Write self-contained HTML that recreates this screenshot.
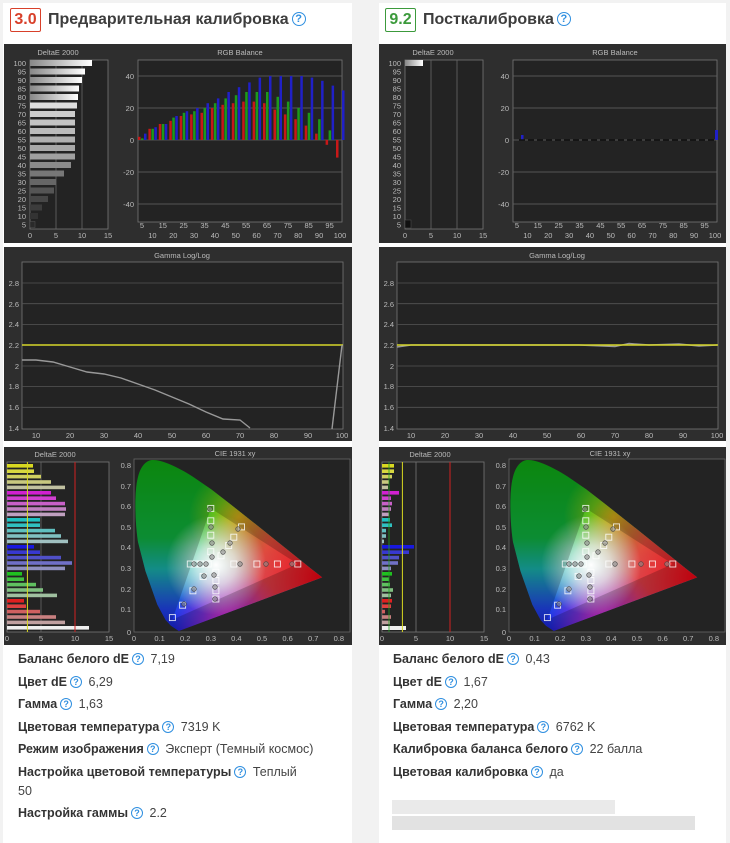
<!DOCTYPE html>
<html><head><meta charset="utf-8">
<style>
*{margin:0;padding:0;box-sizing:border-box}
body{width:730px;height:830px;background:#f2f2f2;position:relative;overflow:hidden;font-family:"Liberation Sans",sans-serif}
.card{position:absolute;top:3px;background:#fff;height:840px}
.badge{position:absolute;top:8px;width:31px;height:24px;border:1px solid;font:bold 16px "Liberation Sans",sans-serif;text-align:center;line-height:22px;border-radius:2px}
.title{position:absolute;top:11px;font:bold 16px "Liberation Sans",sans-serif;color:#3d3d3d}
.q{display:inline-block;width:12px;height:12px;border:1.3px solid #2f8fe0;border-radius:50%;color:#2f8fe0;font:bold 9px "Liberation Sans",sans-serif;text-align:center;line-height:10px;vertical-align:1px;margin:0 3px}
.title .q{width:14px;height:14px;font-size:11px;line-height:12px;vertical-align:2px}
svg{position:absolute;display:block}
svg text{font-family:"Liberation Sans",sans-serif;font-size:7.5px;fill:#bbb}
.rows{position:absolute;font-size:12.5px;color:#444;line-height:22.5px}
.rows b{color:#333}
.blur{position:absolute;background:#e6e6e6}
</style></head><body>
<svg width="0" height="0" style="position:absolute">
<defs>
<linearGradient id="gv" x1="0" y1="0" x2="0" y2="1"><stop offset="0" stop-color="#10a810"/><stop offset=".45" stop-color="#10b040"/><stop offset=".62" stop-color="#18b0a8"/><stop offset=".85" stop-color="#2040e8"/><stop offset="1" stop-color="#1818d0"/></linearGradient>
<radialGradient id="gr" cx="318" cy="130" r="125" gradientUnits="userSpaceOnUse"><stop offset="0" stop-color="#f00010"/><stop offset=".5" stop-color="#ff3838" stop-opacity=".85"/><stop offset="1" stop-color="#ff4040" stop-opacity="0"/></radialGradient>
<radialGradient id="gm" cx="225" cy="175" r="55" gradientUnits="userSpaceOnUse"><stop offset="0" stop-color="#e030d8"/><stop offset="1" stop-color="#c020c0" stop-opacity="0"/></radialGradient>
<radialGradient id="gy" cx="235" cy="70" r="50" gradientUnits="userSpaceOnUse"><stop offset="0" stop-color="#e0e000" stop-opacity=".85"/><stop offset="1" stop-color="#c8d000" stop-opacity="0"/></radialGradient>
<radialGradient id="gw" cx="212" cy="118" r="50" gradientUnits="userSpaceOnUse"><stop offset="0" stop-color="#fff"/><stop offset=".4" stop-color="#fff" stop-opacity=".7"/><stop offset="1" stop-color="#fff" stop-opacity="0"/></radialGradient>
<clipPath id="loc"><path d="M174.8,184 L166.9,178.8 L161.7,173.1 L153.3,157.6 L141.5,124.2 L134,95 C131,75 130,45 134,30 C137,18 143,13 149,13 C158,13 172,19 188.9,29.7 L207.3,42.4 L225.5,56.5 L261.1,84.7 L290.5,108.4 L306.9,121.6 L318.2,130.4 Z"/></clipPath>
<g id="cie">
<rect x="130" y="12" width="216" height="173" fill="#232323" stroke="#666" stroke-width=".8"/>
<g clip-path="url(#loc)">
<rect x="125" y="10" width="200" height="180" fill="url(#gv)"/>
<rect x="125" y="10" width="200" height="180" fill="url(#gy)"/>
<rect x="125" y="10" width="200" height="180" fill="url(#gr)"/>
<rect x="125" y="10" width="200" height="180" fill="url(#gm)"/>
<rect x="125" y="10" width="200" height="180" fill="url(#gw)"/>
<path d="M120,5H330V195H120Z M293.8,117 L206.8,61.4 L168.4,172.6Z" fill="#000" fill-opacity=".2" fill-rule="evenodd"/>
</g>
<g fill="none" stroke="#fff" stroke-width=".9" opacity=".85">
<rect x="226.8" y="114" width="6" height="6"/><rect x="249.9" y="114" width="6" height="6"/><rect x="270.4" y="114" width="6" height="6"/><rect x="290.8" y="114" width="6" height="6"/>
<rect x="203.8" y="101.7" width="6" height="6"/><rect x="203.8" y="85.2" width="6" height="6"/><rect x="203.8" y="70.8" width="6" height="6"/><rect x="203.8" y="58.4" width="6" height="6"/>
<rect x="196.1" y="126.4" width="6" height="6"/><rect x="185.9" y="140.8" width="6" height="6"/><rect x="175.6" y="155.2" width="6" height="6"/><rect x="165.4" y="167.6" width="6" height="6"/>
<rect x="201.2" y="114" width="6" height="6"/><rect x="193.6" y="114" width="6" height="6"/><rect x="188.4" y="114" width="6" height="6"/><rect x="183.3" y="114" width="6" height="6"/>
<rect x="208.9" y="122.3" width="6" height="6"/><rect x="208.9" y="130.5" width="6" height="6"/><rect x="208.9" y="140.8" width="6" height="6"/><rect x="208.9" y="149" width="6" height="6"/>
<rect x="214" y="105.8" width="6" height="6"/><rect x="221.7" y="95.5" width="6" height="6"/><rect x="226.8" y="87.2" width="6" height="6"/><rect x="234.5" y="76.9" width="6" height="6"/>
</g>
<g fill="#888" fill-opacity=".6" stroke="#444" stroke-width=".6">
<circle cx="236" cy="117" r="2.3"/><circle cx="262" cy="117" r="2.3"/><circle cx="288" cy="117" r="2.3"/><circle cx="206" cy="62" r="2.3"/><circle cx="207" cy="80" r="2.3"/><circle cx="208" cy="96" r="2.3"/><circle cx="208" cy="110" r="2.3"/><circle cx="190" cy="117" r="2.3"/><circle cx="196" cy="117" r="2.3"/><circle cx="202" cy="117" r="2.3"/><circle cx="210" cy="128" r="2.3"/><circle cx="211" cy="140" r="2.3"/><circle cx="211" cy="152" r="2.3"/><circle cx="200" cy="129" r="2.3"/><circle cx="190" cy="142" r="2.3"/><circle cx="180" cy="157" r="2.3"/><circle cx="219" cy="105" r="2.3"/><circle cx="226" cy="96" r="2.3"/><circle cx="234" cy="82" r="2.3"/>
</g>
<text x="231" y="9" text-anchor="middle">CIE 1931 xy</text>
<g text-anchor="end"><text x="127" y="21">0.8</text><text x="127" y="42">0.7</text><text x="127" y="62">0.6</text><text x="127" y="83">0.5</text><text x="127" y="103">0.4</text><text x="127" y="124">0.3</text><text x="127" y="145">0.2</text><text x="127" y="165">0.1</text><text x="127" y="188">0</text></g>
<g text-anchor="middle"><text x="130" y="194">0</text><text x="155.6" y="194">0.1</text><text x="181.2" y="194">0.2</text><text x="206.8" y="194">0.3</text><text x="232.4" y="194">0.4</text><text x="258" y="194">0.5</text><text x="283.6" y="194">0.6</text><text x="309.2" y="194">0.7</text><text x="334.8" y="194">0.8</text></g>
</g>
<g id="gbase">
<rect x="18" y="15" width="321" height="167" fill="#232323" stroke="#777" stroke-width=".8"/>
<g stroke="#555" stroke-width=".8"><line x1="18" y1="36" x2="339" y2="36"/><line x1="18" y1="56.7" x2="339" y2="56.7"/><line x1="18" y1="77.4" x2="339" y2="77.4"/><line x1="18" y1="119" x2="339" y2="119"/><line x1="18" y1="139.6" x2="339" y2="139.6"/><line x1="18" y1="160.3" x2="339" y2="160.3"/></g>
<text x="178" y="11" text-anchor="middle">Gamma Log/Log</text>
<g text-anchor="end"><text x="15" y="39">2.8</text><text x="15" y="60">2.6</text><text x="15" y="80">2.4</text><text x="15" y="101">2.2</text><text x="15" y="122">2</text><text x="15" y="142">1.8</text><text x="15" y="163">1.6</text><text x="15" y="184">1.4</text></g>
<g text-anchor="middle"><text x="32" y="191">10</text><text x="66" y="191">20</text><text x="100" y="191">30</text><text x="134" y="191">40</text><text x="168" y="191">50</text><text x="202" y="191">60</text><text x="236" y="191">70</text><text x="270" y="191">80</text><text x="304" y="191">90</text><text x="338" y="191">100</text></g>
</g>
<g id="rgbbase">
<rect x="134" y="16" width="204" height="162" fill="#232323" stroke="#777" stroke-width=".8"/>
<g stroke="#666" stroke-width=".8"><line x1="134" y1="32" x2="338" y2="32"/><line x1="134" y1="64" x2="338" y2="64"/><line x1="134" y1="96" x2="338" y2="96"/><line x1="134" y1="128" x2="338" y2="128"/><line x1="134" y1="160" x2="338" y2="160"/></g>
<text x="236" y="11" text-anchor="middle">RGB Balance</text>
<g text-anchor="end"><text x="130" y="35">40</text><text x="130" y="67">20</text><text x="130" y="99">0</text><text x="130" y="131">-20</text><text x="130" y="163">-40</text></g>
<g text-anchor="middle"><text x="138" y="184">5</text><text x="158.8" y="184">15</text><text x="179.7" y="184">25</text><text x="200.5" y="184">35</text><text x="221.4" y="184">45</text><text x="242.2" y="184">55</text><text x="263" y="184">65</text><text x="283.9" y="184">75</text><text x="304.7" y="184">85</text><text x="325.6" y="184">95</text>
<text x="148.4" y="194">10</text><text x="169.3" y="194">20</text><text x="190.1" y="194">30</text><text x="210.9" y="194">40</text><text x="231.8" y="194">50</text><text x="252.6" y="194">60</text><text x="273.5" y="194">70</text><text x="294.3" y="194">80</text><text x="315.1" y="194">90</text><text x="336" y="194">100</text></g>
<rect x="26" y="16" width="78" height="169" fill="#232323" stroke="#777" stroke-width=".8"/>
<g stroke="#666" stroke-width=".8"><line x1="52" y1="16" x2="52" y2="185"/><line x1="78" y1="16" x2="78" y2="185"/></g>
<text x="54" y="11" text-anchor="middle">DeltaE 2000</text>
<g text-anchor="end"><text x="22" y="22">100</text><text x="22" y="30.5">95</text><text x="22" y="39">90</text><text x="22" y="47.5">85</text><text x="22" y="56">80</text><text x="22" y="64.5">75</text><text x="22" y="73">70</text><text x="22" y="81.5">65</text><text x="22" y="90">60</text><text x="22" y="98.5">55</text><text x="22" y="107">50</text><text x="22" y="115.5">45</text><text x="22" y="124">40</text><text x="22" y="132.5">35</text><text x="22" y="141">30</text><text x="22" y="149.5">25</text><text x="22" y="158">20</text><text x="22" y="166.5">15</text><text x="22" y="175">10</text><text x="22" y="183.5">5</text></g>
<g text-anchor="middle"><text x="26" y="194">0</text><text x="52" y="194">5</text><text x="78" y="194">10</text><text x="104" y="194">15</text></g>
</g>
<linearGradient id="bw" x1="0" x2="1"><stop offset="0" stop-color="#888"/><stop offset="1" stop-color="#fff"/></linearGradient>
</defs></svg>

<div class="card" style="left:3px;width:349px"></div>
<div class="card" style="left:379px;width:347px"></div>

<div class="badge" style="left:10px;color:#d8402a;border-color:#d8402a">3.0</div>
<div class="title" style="left:48px">Предварительная калибровка<span class="q">?</span></div>
<div class="badge" style="left:385px;color:#3c9a3c;border-color:#3c9a3c">9.2</div>
<div class="title" style="left:423px">Посткалибровка<span class="q">?</span></div>

<svg style="left:4px;top:44px" width="348" height="199" viewBox="0 0 348 199">
<rect width="348" height="199" fill="#2e2e2e"/>
<use href="#rgbbase"/>
<g>
<rect x="26" y="16" width="62" height="6" fill="url(#bw)"/><rect x="26" y="24.5" width="55" height="6" fill="url(#bw)"/><rect x="26" y="33" width="52" height="6" fill="url(#bw)"/><rect x="26" y="41.5" width="49" height="6" fill="url(#bw)"/><rect x="26" y="50" width="48" height="6" fill="url(#bw)"/><rect x="26" y="58.5" width="47" height="6" fill="#ddd"/><rect x="26" y="67" width="45" height="6" fill="#ccc"/><rect x="26" y="75.5" width="45" height="6" fill="#c4c4c4"/><rect x="26" y="84" width="45" height="6" fill="#bbb"/><rect x="26" y="92.5" width="45" height="6" fill="#b0b0b0"/><rect x="26" y="101" width="45" height="6" fill="#a8a8a8"/><rect x="26" y="109.5" width="45" height="6" fill="#a0a0a0"/><rect x="26" y="118" width="41" height="6" fill="#8a8a8a"/><rect x="26" y="126.5" width="34" height="6" fill="#777"/><rect x="26" y="135" width="26" height="6" fill="#666"/><rect x="26" y="143.5" width="24" height="6" fill="#555"/><rect x="26" y="152" width="18" height="6" fill="#474747"/><rect x="26" y="160.5" width="12" height="6" fill="#3c3c3c"/><rect x="26" y="169" width="8" height="6" fill="#333"/><rect x="26" y="177.5" width="5" height="6" fill="#2a2a2a" stroke="#555" stroke-width=".5"/>
</g>
<g transform="translate(0,96) scale(1,-1.6)">
<g fill="#c81818"><rect x="134" y="0" width="2.5" height="2"/><rect x="144.4" y="0" width="2.5" height="7"/><rect x="154.8" y="0" width="2.5" height="10"/><rect x="165.3" y="0" width="2.5" height="12"/><rect x="175.7" y="0" width="2.5" height="15"/><rect x="186.1" y="0" width="2.5" height="16"/><rect x="196.5" y="0" width="2.5" height="17"/><rect x="206.9" y="0" width="2.5" height="20"/><rect x="217.4" y="0" width="2.5" height="22"/><rect x="227.8" y="0" width="2.5" height="23"/><rect x="238.2" y="0" width="2.5" height="24"/><rect x="248.6" y="0" width="2.5" height="24"/><rect x="259" y="0" width="2.5" height="23"/><rect x="269.5" y="0" width="2.5" height="19"/><rect x="279.9" y="0" width="2.5" height="16"/><rect x="290.3" y="0" width="2.5" height="13"/><rect x="300.7" y="0" width="2.5" height="9"/><rect x="311.1" y="0" width="2.5" height="4"/><rect x="321.6" y="-3" width="2.5" height="3"/><rect x="332" y="-11" width="2.5" height="11"/></g>
<g fill="#1c9a1c"><rect x="137" y="0" width="2.5" height="1"/><rect x="147.4" y="0" width="2.5" height="7"/><rect x="157.8" y="0" width="2.5" height="10"/><rect x="168.3" y="0" width="2.5" height="14"/><rect x="178.7" y="0" width="2.5" height="17"/><rect x="189.1" y="0" width="2.5" height="18"/><rect x="199.5" y="0" width="2.5" height="20"/><rect x="209.9" y="0" width="2.5" height="23"/><rect x="220.4" y="0" width="2.5" height="26"/><rect x="230.8" y="0" width="2.5" height="28"/><rect x="241.2" y="0" width="2.5" height="30"/><rect x="251.6" y="0" width="2.5" height="30"/><rect x="262" y="0" width="2.5" height="30"/><rect x="272.5" y="0" width="2.5" height="27"/><rect x="282.9" y="0" width="2.5" height="24"/><rect x="293.3" y="0" width="2.5" height="20"/><rect x="303.7" y="0" width="2.5" height="17"/><rect x="314.1" y="0" width="2.5" height="13"/><rect x="324.6" y="0" width="2.5" height="6"/></g>
<g fill="#2020c8"><rect x="140" y="0" width="2.5" height="4"/><rect x="150.4" y="0" width="2.5" height="8"/><rect x="160.8" y="0" width="2.5" height="10"/><rect x="171.3" y="0" width="2.5" height="15"/><rect x="181.7" y="0" width="2.5" height="18"/><rect x="192.1" y="0" width="2.5" height="20"/><rect x="202.5" y="0" width="2.5" height="23"/><rect x="212.9" y="0" width="2.5" height="26"/><rect x="223.4" y="0" width="2.5" height="30"/><rect x="233.8" y="0" width="2.5" height="33"/><rect x="244.2" y="0" width="2.5" height="36"/><rect x="254.6" y="0" width="2.5" height="39"/><rect x="265" y="0" width="2.5" height="40"/><rect x="275.5" y="0" width="2.5" height="40"/><rect x="285.9" y="0" width="2.5" height="40"/><rect x="296.3" y="0" width="2.5" height="40"/><rect x="306.7" y="0" width="2.5" height="39"/><rect x="317.1" y="0" width="2.5" height="37"/><rect x="327.6" y="0" width="2.5" height="34"/><rect x="338" y="0" width="2.5" height="31"/></g>
</g>
</svg>

<svg style="left:379px;top:44px" width="347" height="199" viewBox="0 0 347 199">
<rect width="347" height="199" fill="#2e2e2e"/>
<use href="#rgbbase"/>
<rect x="26" y="16" width="18" height="6" fill="url(#bw)"/>
<rect x="26" y="176" width="6" height="8" fill="#111" stroke="#555" stroke-width=".5"/>
<rect x="142" y="91" width="2.5" height="5" fill="#2020c8"/>
<rect x="336" y="86" width="3" height="10" fill="#2020c8"/>
<line x1="140" y1="96" x2="336" y2="96" stroke="#111" stroke-width="1.5" stroke-dasharray="6,3"/>
</svg>

<svg style="left:4px;top:247px" width="348" height="194" viewBox="0 0 348 194">
<rect width="348" height="194" fill="#2e2e2e"/>
<use href="#gbase"/>
<line x1="18" y1="98" x2="339" y2="98" stroke="#d6d62a" stroke-width="1.6"/>
<polyline points="18,113 32,113 49,115 66,120 83,125 100,127 117,131 134,137 151,143 168,150 185,157 202,165 219,172 236,173 246,181" fill="none" stroke="#999" stroke-width="1.4"/>
<polyline points="328,182 338,98" fill="none" stroke="#999" stroke-width="1.4"/>
</svg>

<svg style="left:379px;top:247px" width="347" height="194" viewBox="0 0 347 194">
<rect width="347" height="194" fill="#2e2e2e"/>
<use href="#gbase"/>
<polyline points="18,100 32,98 100,98 200,98 236,99.5 250,96.5 270,98 300,97 320,99 338,98" fill="none" stroke="#999" stroke-width="1.4"/>
<line x1="18" y1="98" x2="339" y2="98" stroke="#d6d62a" stroke-width="1.4"/>
</svg>

<svg style="left:4px;top:447px" width="348" height="198" viewBox="0 0 348 198">
<rect width="348" height="198" fill="#2e2e2e"/>
<rect x="3" y="15" width="102" height="170" fill="#232323" stroke="#777" stroke-width=".8"/>
<text x="51" y="10" text-anchor="middle">DeltaE 2000</text>
<g text-anchor="middle"><text x="3" y="194">0</text><text x="37" y="194">5</text><text x="71" y="194">10</text><text x="105" y="194">15</text></g>
<line x1="37" y1="15" x2="37" y2="185" stroke="#666" stroke-width=".8"/>
<g>
<rect x="3" y="17" width="26" height="3.6" fill="#d8d820"/><rect x="3" y="22.4" width="27" height="3.6" fill="#d8d840"/><rect x="3" y="27.8" width="34" height="3.6" fill="#d0d060"/><rect x="3" y="33.2" width="44" height="3.6" fill="#c8c880"/><rect x="3" y="38.6" width="58" height="3.6" fill="#c0c0a0"/>
<rect x="3" y="44" width="44" height="3.6" fill="#d020d0"/><rect x="3" y="49.4" width="49" height="3.6" fill="#d040d0"/><rect x="3" y="54.8" width="58" height="3.6" fill="#c860c8"/><rect x="3" y="60.2" width="59" height="3.6" fill="#c080c0"/><rect x="3" y="65.6" width="58" height="3.6" fill="#c0a0c0"/>
<rect x="3" y="71" width="33" height="3.6" fill="#20c0c0"/><rect x="3" y="76.4" width="33" height="3.6" fill="#30c0c0"/><rect x="3" y="81.8" width="48" height="3.6" fill="#60c0c0"/><rect x="3" y="87.2" width="54" height="3.6" fill="#80c0c0"/><rect x="3" y="92.6" width="61" height="3.6" fill="#a0c0c0"/>
<rect x="3" y="98" width="27" height="3.6" fill="#1818e0"/><rect x="3" y="103.4" width="33" height="3.6" fill="#3838d0"/><rect x="3" y="108.8" width="54" height="3.6" fill="#5050c8"/><rect x="3" y="114.2" width="65" height="3.6" fill="#7070c8"/><rect x="3" y="119.6" width="58" height="3.6" fill="#9090c0"/>
<rect x="3" y="125" width="15" height="3.6" fill="#20c020"/><rect x="3" y="130.4" width="17" height="3.6" fill="#40c040"/><rect x="3" y="135.8" width="29" height="3.6" fill="#60c060"/><rect x="3" y="141.2" width="36" height="3.6" fill="#80c080"/><rect x="3" y="146.6" width="50" height="3.6" fill="#a0c0a0"/>
<rect x="3" y="152" width="17" height="3.6" fill="#e02020"/><rect x="3" y="157.4" width="19" height="3.6" fill="#e04040"/><rect x="3" y="162.8" width="33" height="3.6" fill="#d06060"/><rect x="3" y="168.2" width="49" height="3.6" fill="#c88080"/><rect x="3" y="173.6" width="58" height="3.6" fill="#c0a0a0"/>
<rect x="3" y="179" width="82" height="3.6" fill="#eee"/>
</g>
<line x1="23.4" y1="15" x2="23.4" y2="185" stroke="#d8d820" stroke-width="1"/>
<line x1="71" y1="15" x2="71" y2="185" stroke="#d02020" stroke-width="1"/>
<use href="#cie"/>
</svg>

<svg style="left:379px;top:447px" width="347" height="198" viewBox="0 0 347 198">
<rect width="347" height="198" fill="#2e2e2e"/>
<rect x="3" y="15" width="102" height="170" fill="#232323" stroke="#777" stroke-width=".8"/>
<text x="51" y="10" text-anchor="middle">DeltaE 2000</text>
<g text-anchor="middle"><text x="3" y="194">0</text><text x="37" y="194">5</text><text x="71" y="194">10</text><text x="105" y="194">15</text></g>
<line x1="37" y1="15" x2="37" y2="185" stroke="#777" stroke-width=".8"/>
<g>
<rect x="3" y="17" width="12" height="3.6" fill="#d8d820"/><rect x="3" y="22.4" width="12" height="3.6" fill="#d8d840"/><rect x="3" y="27.8" width="10" height="3.6" fill="#d0d060"/><rect x="3" y="33.2" width="7" height="3.6" fill="#c8c880"/><rect x="3" y="38.6" width="6" height="3.6" fill="#c0c0a0"/>
<rect x="3" y="44" width="17" height="3.6" fill="#d020d0"/><rect x="3" y="49.4" width="9" height="3.6" fill="#d040d0"/><rect x="3" y="54.8" width="10" height="3.6" fill="#c860c8"/><rect x="3" y="60.2" width="9" height="3.6" fill="#c080c0"/><rect x="3" y="65.6" width="7" height="3.6" fill="#c0a0c0"/>
<rect x="3" y="71" width="8" height="3.6" fill="#20c0c0"/><rect x="3" y="76.4" width="10" height="3.6" fill="#30c0c0"/><rect x="3" y="81.8" width="4" height="3.6" fill="#60c0c0"/><rect x="3" y="87.2" width="4" height="3.6" fill="#80c0c0"/><rect x="3" y="92.6" width="2" height="3.6" fill="#a0c0c0"/>
<rect x="3" y="98" width="32" height="3.6" fill="#1818e0"/><rect x="3" y="103.4" width="27" height="3.6" fill="#3838d0"/><rect x="3" y="108.8" width="17" height="3.6" fill="#5050c8"/><rect x="3" y="114.2" width="16" height="3.6" fill="#7070c8"/><rect x="3" y="119.6" width="9" height="3.6" fill="#9090c0"/>
<rect x="3" y="125" width="10" height="3.6" fill="#20c020"/><rect x="3" y="130.4" width="7" height="3.6" fill="#40c040"/><rect x="3" y="135.8" width="8" height="3.6" fill="#60c060"/><rect x="3" y="141.2" width="11" height="3.6" fill="#80c080"/><rect x="3" y="146.6" width="9" height="3.6" fill="#a0c0a0"/>
<rect x="3" y="152" width="10" height="3.6" fill="#e02020"/><rect x="3" y="157.4" width="9" height="3.6" fill="#e04040"/><rect x="3" y="162.8" width="3" height="3.6" fill="#d06060"/><rect x="3" y="168.2" width="9" height="3.6" fill="#c88080"/><rect x="3" y="173.6" width="8" height="3.6" fill="#c0a0a0"/>
<rect x="3" y="179" width="24" height="4" fill="#eee"/>
</g>
<line x1="10" y1="15" x2="10" y2="185" stroke="#20a020" stroke-width=".8"/>
<line x1="23.4" y1="15" x2="23.4" y2="185" stroke="#d8d820" stroke-width="1"/>
<line x1="71" y1="15" x2="71" y2="185" stroke="#d02020" stroke-width="1"/>
<use href="#cie"/>
</svg>

<div class="rows" style="left:18px;top:648px;width:330px">
<div><b>Баланс белого dE</b><span class="q">?</span> 7,19</div>
<div><b>Цвет dE</b><span class="q">?</span> 6,29</div>
<div><b>Гамма</b><span class="q">?</span> 1,63</div>
<div><b>Цветовая температура</b><span class="q">?</span> 7319 K</div>
<div><b>Режим изображения</b><span class="q">?</span> Эксперт (Темный космос)</div>
<div style="line-height:19.5px;padding-top:2px"><b>Настройка цветовой температуры</b><span class="q">?</span> Теплый<br>50</div>
<div><b>Настройка гаммы</b><span class="q">?</span> 2.2</div>
</div>
<div class="rows" style="left:393px;top:648px;width:330px">
<div><b>Баланс белого dE</b><span class="q">?</span> 0,43</div>
<div><b>Цвет dE</b><span class="q">?</span> 1,67</div>
<div><b>Гамма</b><span class="q">?</span> 2,20</div>
<div><b>Цветовая температура</b><span class="q">?</span> 6762 K</div>
<div><b>Калибровка баланса белого</b><span class="q">?</span> 22 балла</div>
<div><b>Цветовая калибровка</b><span class="q">?</span> да</div>
</div>
<div class="blur" style="left:392px;top:800px;width:223px;height:14px;background:#eaeaea"></div>
<div class="blur" style="left:392px;top:816px;width:303px;height:14px;background:#e2e2e2"></div>
</body></html>
